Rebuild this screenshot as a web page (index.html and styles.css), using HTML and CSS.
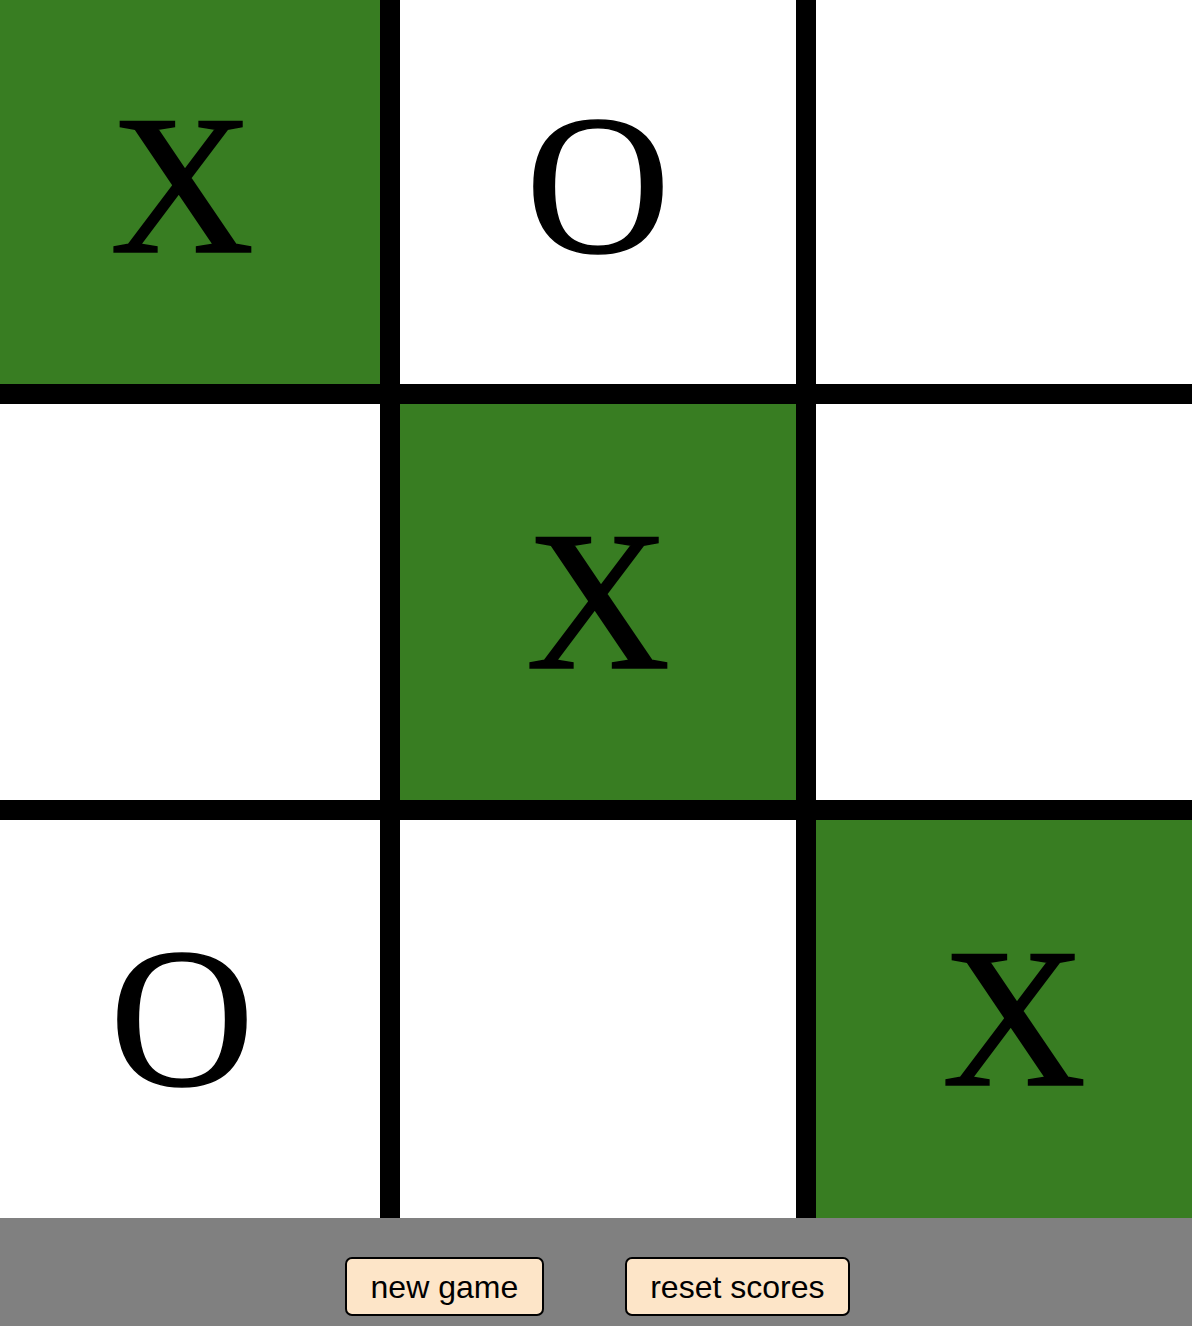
FILE: index.html
```html
<!DOCTYPE html>
<html>
<head>
<meta charset="utf-8">
<link rel="stylesheet" href="styles.css">
</head>
<body>
<div class="page">
  <div class="board">
    <div class="cell win">X</div>
    <div class="cell">O</div>
    <div class="cell"></div>
    <div class="cell"></div>
    <div class="cell win">X</div>
    <div class="cell"></div>
    <div class="cell">O</div>
    <div class="cell"></div>
    <div class="cell win">X</div>
  </div>
  <div class="controls">
    <button class="btn">new game</button>
    <button class="btn">reset scores</button>
  </div>
</div>
</body>
</html>
```

FILE: styles.css
```css
html, body {
  margin: 0;
  padding: 0;
  overflow: hidden;
  background: #ffffff;
}
.page {
  width: 1192px;
  height: 1326px;
  overflow: hidden;
  display: flex;
  flex-direction: column;
}
.board {
  display: grid;
  grid-template-columns: 396px 396px 396px;
  grid-template-rows: 396px 396px 398px;
  gap: 20px;
  background: #000000;
  width: 1228px;
  margin-left: -16px;
  margin-top: -12px;
  flex: none;
}
.cell {
  background: #ffffff;
  display: flex;
  align-items: center;
  justify-content: center;
  padding-bottom: 2px;
  font-family: "Liberation Serif", "Times New Roman", serif;
  font-size: 200px;
  line-height: 1;
  color: #000000;
  -webkit-text-stroke: 1.5px #000000;
}
.cell.win {
  background: #387d22;
}
.controls {
  flex: 1;
  background: #808080;
  display: flex;
  justify-content: center;
  align-items: flex-start;
  gap: 81px;
  padding-top: 39px;
  padding-left: 3px;
}
.btn {
  font-family: "Liberation Sans", Arial, sans-serif;
  font-size: 32px;
  line-height: 37px;
  color: #000000;
  background: #fde5c8;
  border: 2.5px solid #000000;
  border-radius: 7px;
  padding: 9.5px 23.5px 8.5px;
  margin: 0;
}
```
